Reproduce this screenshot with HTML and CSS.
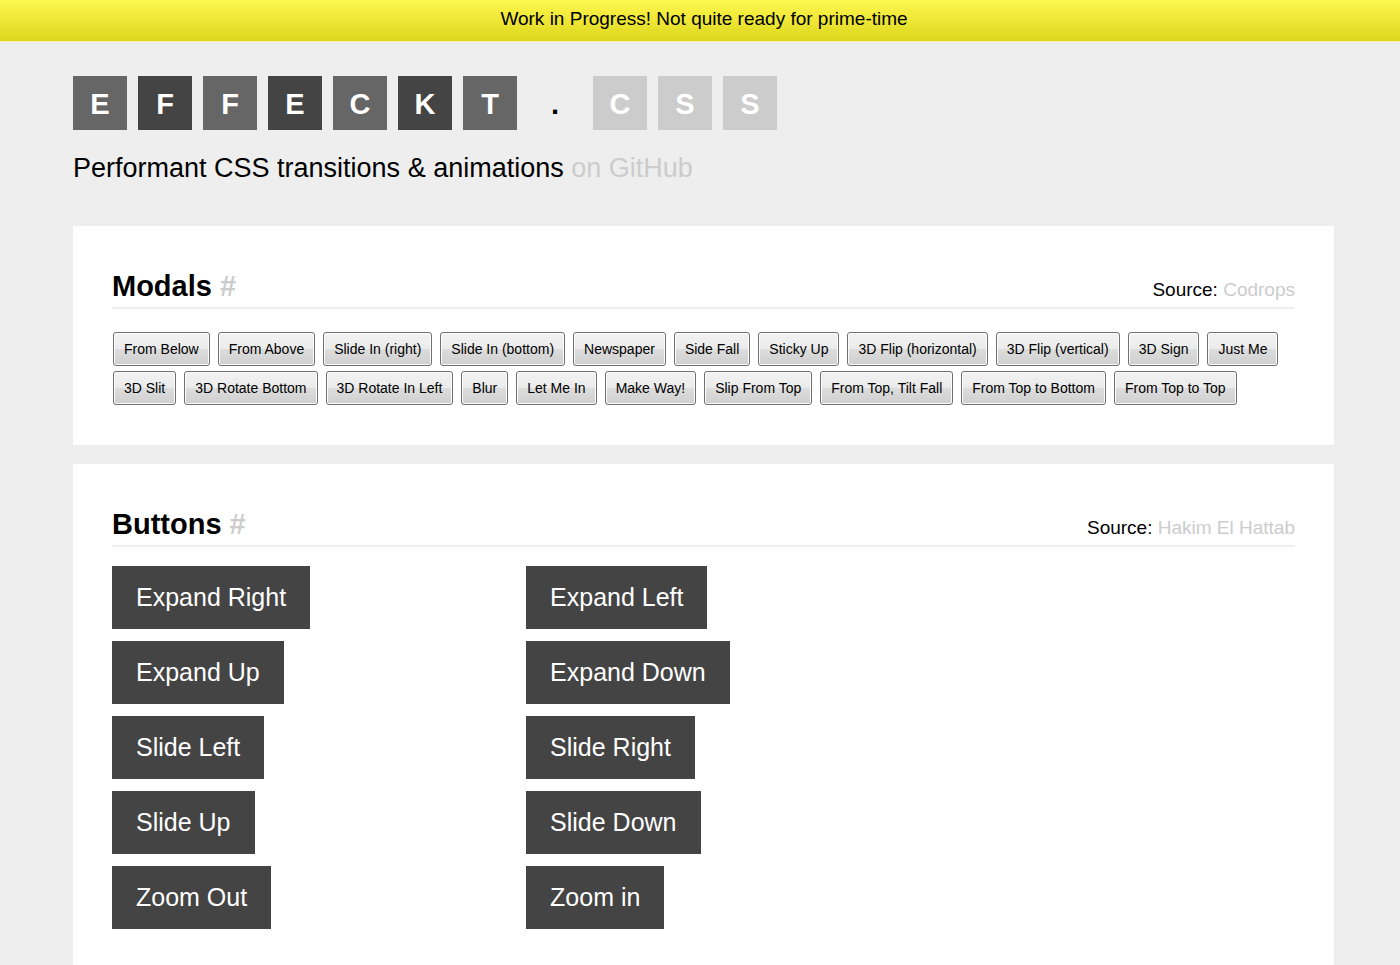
FILE: index.html
```html
<!DOCTYPE html>
<html lang="en">
<head>
    <meta charset="UTF-8">
    <meta name="viewport" content="width=device-width, initial-scale=1.0">
    <title>Effeckt.css</title>

    <link rel="stylesheet" href="styles.css">
</head>
<body>
    <div class="banner">Work in Progress! Not quite ready for prime-time</div>

    <div class="page">
        <header>
            <h1 class="logo">
                <span>E</span>
                <span>F</span>
                <span>F</span>
                <span>E</span>
                <span>C</span>
                <span>K</span>
                <span>T</span>
                <span class="dot">.</span>
                <span class="light">C</span>
                <span class="light">S</span>
                <span class="light">S</span>
            </h1>
            <p class="tagline">Performant CSS transitions &amp; animations <a href="#">on GitHub</a></p>
        </header>

        <section class="panel" id="modals">
            <div class="panel-head">
                <h2>Modals <a href="#modals">#</a></h2>
                <p class="source">Source: <a href="#">Codrops</a></p>
            </div>
            <div class="modal-buttons">
                <button>From Below</button>
                <button>From Above</button>
                <button>Slide In (right)</button>
                <button>Slide In (bottom)</button>
                <button>Newspaper</button>
                <button>Side Fall</button>
                <button>Sticky Up</button>
                <button>3D Flip (horizontal)</button>
                <button>3D Flip (vertical)</button>
                <button>3D Sign</button>
                <button>Just Me</button>
                <button>3D Slit</button>
                <button>3D Rotate Bottom</button>
                <button>3D Rotate In Left</button>
                <button>Blur</button>
                <button>Let Me In</button>
                <button>Make Way!</button>
                <button>Slip From Top</button>
                <button>From Top, Tilt Fall</button>
                <button>From Top to Bottom</button>
                <button>From Top to Top</button>
            </div>
        </section>

        <section class="panel" id="buttons">
            <div class="panel-head">
                <h2>Buttons <a href="#buttons">#</a></h2>
                <p class="source">Source: <a href="#">Hakim El Hattab</a></p>
            </div>
            <div class="effect-buttons">
                <button>Expand Right</button>
                <button>Expand Left</button>
                <button>Expand Up</button>
                <button>Expand Down</button>
                <button>Slide Left</button>
                <button>Slide Right</button>
                <button>Slide Up</button>
                <button>Slide Down</button>
                <button>Zoom Out</button>
                <button>Zoom in</button>
            </div>
        </section>
    </div>
</body>
</html>
```
FILE: styles.css
```css
* {
    box-sizing: border-box;
}

body {
    margin: 0;
    font-family: "Liberation Sans", Arial, sans-serif;
    font-size: 19px;
    color: #000;
    background: #eee;
    overflow-x: hidden;
}

h1, h2, p {
    margin: 0;
}

a {
    color: #ccc;
    text-decoration: none;
}

button {
    font-family: inherit;
    cursor: pointer;
}

.banner {
    height: 42px;
    padding-right: 8px;
    padding-left: 16px;
    line-height: 38px;
    text-align: center;
    background: linear-gradient(#fff84f, #ddd61c);
    border-bottom: 1px solid #f2efb0;
}

.page {
    padding: 34px 66px 0 73px;
}

.logo {
    display: flex;
    gap: 11px;
    font-size: 29px;
    line-height: 56px;
}

.logo span {
    width: 54px;
    height: 54px;
    text-align: center;
    color: #fff;
    background: #666;
}

.logo span:nth-child(even) {
    background: #444;
}

.logo .dot:nth-child(even) {
    color: #000;
    background: none;
}

.logo .light:nth-child(n) {
    background: #ccc;
}

.tagline {
    margin-top: 22px;
    margin-bottom: 42px;
    font-size: 27px;
    line-height: 32px;
}

.panel {
    padding: 39px 39px 40px;
    margin-bottom: 19px;
    background: #fff;
}

.panel-head {
    display: flex;
    justify-content: space-between;
    align-items: baseline;
    border-bottom: 2px solid #eee;
}

.panel-head h2 {
    font-size: 29px;
    line-height: 42px;
}

.modal-buttons {
    display: flex;
    flex-wrap: wrap;
    gap: 5px 8px;
    margin-top: 23px;
    padding-left: 1px;
}

.modal-buttons button {
    height: 34px;
    padding: 0 10px;
    font-size: 14px;
    color: #000;
    background: linear-gradient(#f2f2f2, #ebebeb 50%, #dddddd 50%, #cfcfcf);
    border: 1px solid #707070;
    border-radius: 3px;
    box-shadow: inset 0 0 0 1px #fcfcfc;
}

.effect-buttons {
    display: grid;
    grid-template-columns: 35% 35%;
    justify-items: start;
    gap: 12px 0;
    margin-top: 19px;
}

.effect-buttons button {
    height: 63px;
    padding: 0 24px;
    font-size: 25px;
    color: #fff;
    background: #444;
    border: 0;
}
```
